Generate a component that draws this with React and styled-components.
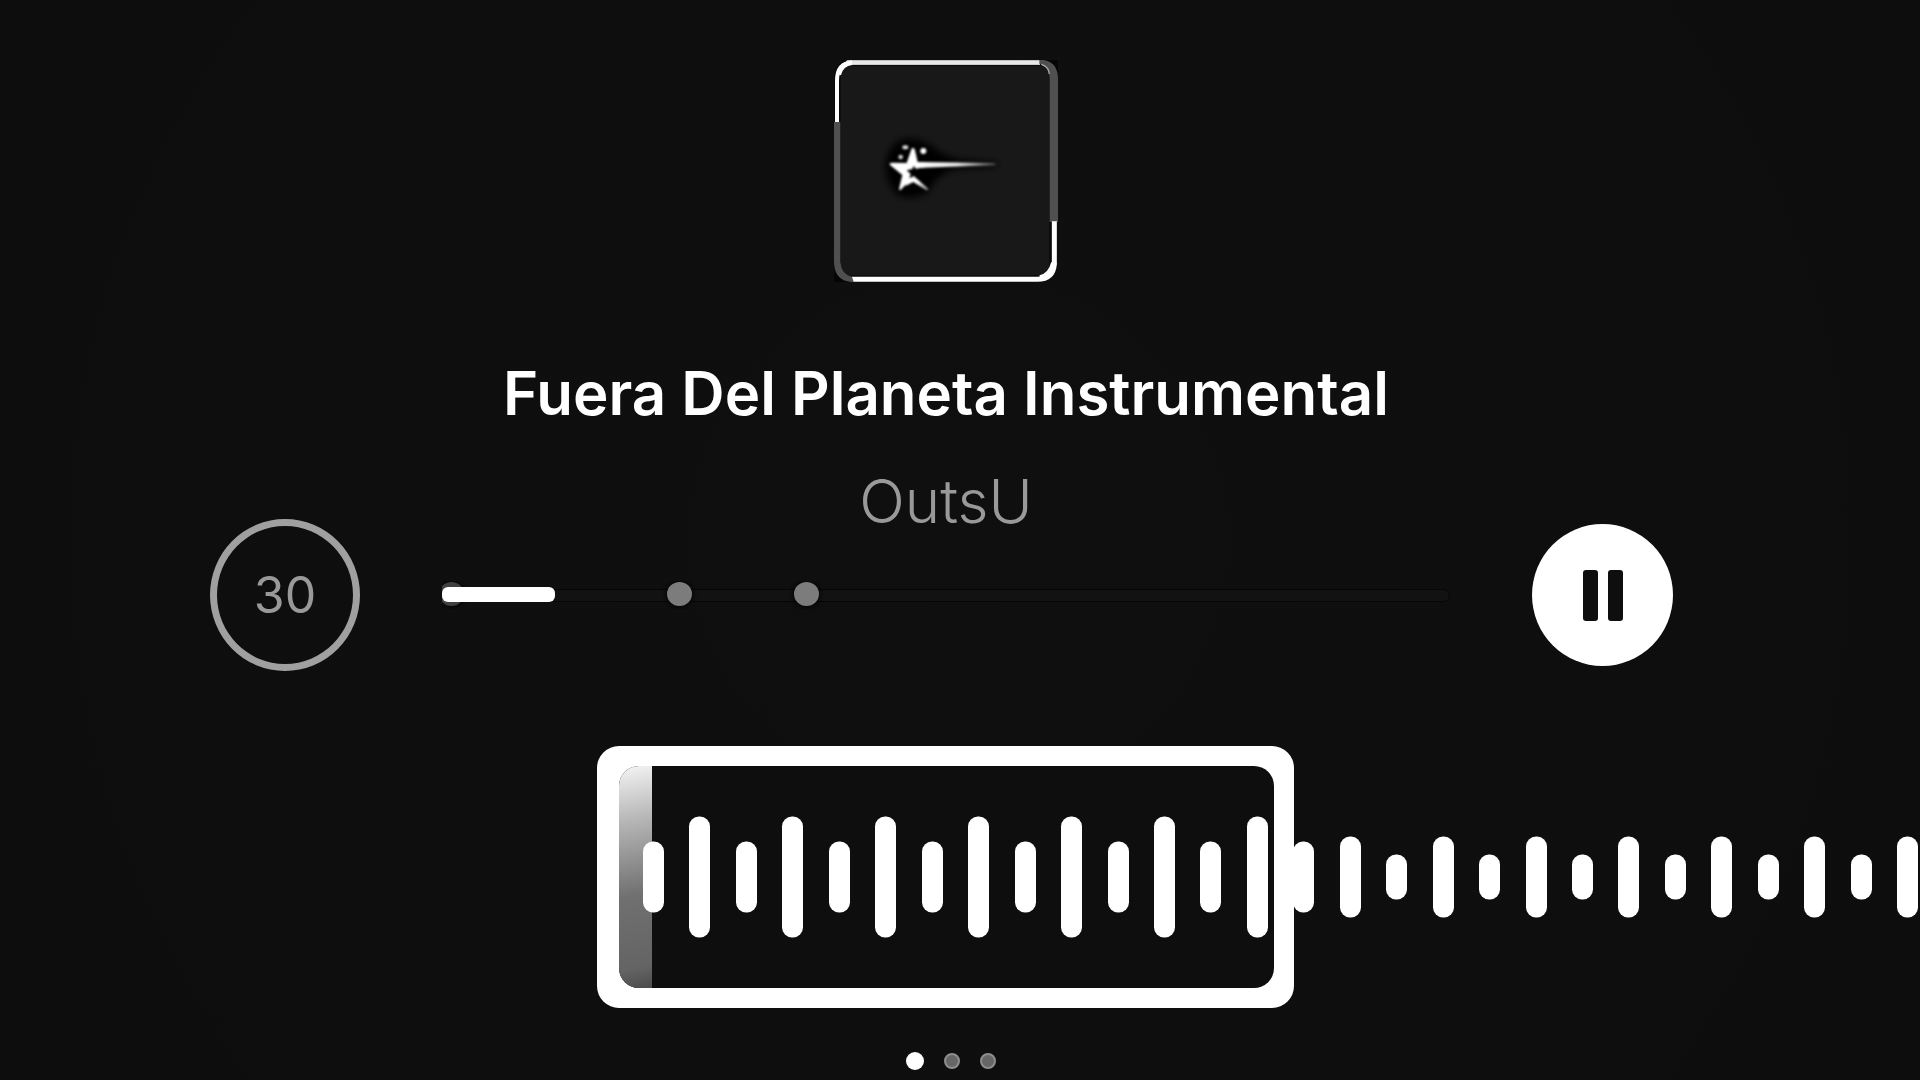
import React, { useState } from "react";
import styled, { createGlobalStyle } from "styled-components";

const GlobalStyle = createGlobalStyle`
  * { box-sizing: border-box; }
  body { margin: 0; background: #0e0e0e; }
  button { padding: 0; border: 0; font-family: inherit; cursor: pointer; }
`;

const Screen = styled.main`
  display: flex;
  flex-direction: column;
  min-height: 100vh;
  padding: 60px 0 10px;
  overflow: hidden;
  color: #fff;
  background: radial-gradient(circle at 50% 50%, #0f0f0f 0, #0e0e0e 840px, #0d0d0d 1100px);
  font-family: Inter, "Liberation Sans", sans-serif;
`;

const Header = styled.header`
  display: flex;
  flex-direction: column;
  align-items: center;
  padding-right: 28px;
  text-align: center;
`;

const Title = styled.h1`
  margin: 76px 0 0;
  font-size: 60px;
  font-weight: 600;
  line-height: 70px;
`;

const Artist = styled.p`
  margin: 38px 0 0;
  color: #999;
  font-size: 60px;
  font-weight: 300;
  line-height: 70px;
`;

const Controls = styled.section`
  display: grid;
  grid-template-columns: 150px minmax(0, 1fr) 141px;
  gap: 82px;
  align-items: center;
  margin: -17px 247px 0 210px;
`;

const DurationButton = styled.button`
  && {
    height: 152px;
    border: 7px solid #a0a0a0;
    border-radius: 50%;
    background: transparent;
    color: #999;
    font-size: 50px;
    font-weight: 400;
  }
`;

const PauseButton = styled.button`
  display: flex;
  align-items: center;
  justify-content: center;
  gap: 10px;
  height: 142px;
  border-radius: 50%;
  background: #fff;
`;

const PauseBar = styled.span`
  width: 15px;
  height: 51px;
  border-radius: 3px;
  background: #0e0e0e;
`;

const Timeline = styled.div`
  position: relative;
  display: flex;
  align-items: center;
  height: 28px;
  overflow: hidden;
`;

const Rail = styled.div`
  flex: 1;
  height: 13px;
  border: 1px solid #060606;
  border-radius: 6px;
  background: #121212;
`;

const Marker = styled.span`
  position: absolute;
  top: 1px;
  left: ${(p) => p.$at}%;
  width: 25px;
  height: 24px;
  margin-left: -13px;
  border-radius: 50%;
  background: ${(p) => (p.$played ? "#404040" : "#7c7c7c")};
  box-shadow: 0 0 4px 1px #050505;
`;

const Played = styled.span`
  position: absolute;
  top: 6px;
  left: 0;
  height: 15px;
  border-radius: 6px;
  background: #fff;
`;

const Seek = styled.input`
  position: absolute;
  inset: 0;
  width: 100%;
  margin: 0;
  opacity: 0;
  cursor: pointer;
`;

const Trimmer = styled.section`
  display: grid;
  grid-template-columns: calc(50% - 363px) 697px minmax(0, 1fr);
  align-items: center;
  margin-top: 75px;
`;

const TrimWindow = styled.div`
  grid-area: 1 / 2;
  height: 262px;
  padding: 20px 20px 20px 22px;
  border-radius: 22px;
  background: #fff;
`;

const TrimInner = styled.div`
  height: 100%;
  overflow: hidden;
  border-radius: 20px;
  background: #0e0e0e;
`;

const TrimProgress = styled.div`
  width: 33px;
  height: 100%;
  background: linear-gradient(170deg, #f4f4f4 0%, #b8b8b8 24%, #707070 58%, #646464 90%, #4c4c4c 100%);
`;

const WaveClip = styled.div`
  display: flex;
  grid-area: 1 / 2 / 2 / 4;
  overflow: hidden;
  padding-left: 46px;
`;

const Wave = styled.svg`
  flex: none;
  display: block;
`;

const Pager = styled.nav`
  display: flex;
  align-items: center;
  justify-content: center;
  gap: 20px;
  margin-top: 44px;
  padding-right: 18px;
`;

const PageDot = styled.button`
  && {
    width: ${(p) => (p.$active ? 18 : 16)}px;
    height: ${(p) => (p.$active ? 18 : 16)}px;
    border: ${(p) => (p.$active ? "0" : "2px solid #8e8e8e")};
    border-radius: 50%;
    background: ${(p) => (p.$active ? "#fff" : "#666")};
  }
`;

const MARKERS = [1, 24, 36];
const MARKER_POSITIONS = { 1: 1, 24: 23.6, 36: 36.2 };

const BAR_PITCH = 46.45;
const BARS = Array.from({ length: 28 }, (_, i) => {
  const tall = i % 2 === 1;
  const inside = i < 15;
  const height = inside ? (tall ? 121 : 71) : tall ? 81 : 45;
  return { x: Math.round(i * BAR_PITCH), height };
});

function Cover() {
  return (
    <svg width="224" height="222" viewBox="72 60 672 666" role="img" aria-label="Cover art">
      <defs>
        <filter id="halo" x="-30%" y="-40%" width="160%" height="180%">
          <feGaussianBlur stdDeviation="11" />
        </filter>
        <filter id="soft" x="-10%" y="-10%" width="120%" height="120%">
          <feGaussianBlur stdDeviation="2.4" />
        </filter>
        <linearGradient id="trail" x1="320" x2="560" y1="0" y2="0" gradientUnits="userSpaceOnUse">
          <stop offset="0" stopColor="#fff" />
          <stop offset="0.5" stopColor="#e8e8e8" />
          <stop offset="1" stopColor="#444" />
        </linearGradient>
        <linearGradient id="leg" x1="310" x2="354" y1="415" y2="450" gradientUnits="userSpaceOnUse">
          <stop offset="0.3" stopColor="#fff" />
          <stop offset="1" stopColor="#777" />
        </linearGradient>
      </defs>
      <path d="M700 60H744V110ZM72 675V726H125Z" fill="#050505" />
      <rect x="82" y="68" width="646" height="648" rx="38" fill="#181818" stroke="#0a0a0a" strokeWidth="20" />
      <path d="M81 248V122Q81 68 128 68H690" fill="none" stroke="#fff" strokeWidth="12" />
      <path d="M110 67H690" fill="none" stroke="#e8e8e8" strokeWidth="12" />
      <path d="M86 104Q94 71 126 68" fill="none" stroke="#fff" strokeWidth="14" />
      <path d="M688 60H700Q744 66 744 118V546H719V112Q719 78 688 71Z" fill="#505050" />
      <path d="M694 73Q716 80 718 102" fill="none" stroke="#aaa" strokeWidth="4" />
      <path d="M733 544V672Q730 717 682 718H126" fill="none" stroke="#fff" strokeWidth="15" />
      <path d="M732 668Q722 708 690 714" fill="none" stroke="#fff" strokeWidth="17" />
      <path d="M72 246H91V666Q94 704 126 710L131 726H124Q72 722 72 664Z" fill="#505050" />
      <path
        d="M226 380Q232 310 285 296Q345 292 390 338L440 358L556 366Q568 372 556 379L430 388Q375 410 352 458Q300 486 258 462Q230 430 226 380Z"
        fill="#000"
        filter="url(#halo)"
      />
      <path d="M330 362L556 369Q562 373 556 376L330 388Z" fill="#000" />
      <g filter="url(#soft)">
        <path
          d="M309 323Q313 323 315 331L323 366H345L345 382L318 386L311 378L307 387L290 391L302 402L298 414L309 411L300 420L272 450Q266 452 268 443L277 405L240 375Q237 368 246 368L290 369L303 331Q305 323 309 323Z"
          fill="#fff"
        />
        <path d="M290 424L311 408L355 446Q354 453 347 449L310 426L286 438Z" fill="url(#leg)" />
        <path d="M318 366L556 369Q561 373 556 376L420 380L318 384Z" fill="url(#trail)" />
        <ellipse cx="286" cy="322" rx="9" ry="6" fill="#ddd" />
        <circle cx="340" cy="333" r="9" fill="#fff" />
        <circle cx="272" cy="351" r="7" fill="#ccc" />
      </g>
    </svg>
  );
}

export default function App() {
  const [position, setPosition] = useState(11);
  const [page, setPage] = useState(0);

  return (
    <>
      <GlobalStyle />
      <Screen>
        <Header>
          <Cover />
          <Title>Fuera Del Planeta Instrumental</Title>
          <Artist>OutsU</Artist>
        </Header>

        <Controls>
          <DurationButton type="button">30</DurationButton>
          <Timeline>
            <Rail />
            {MARKERS.map((m) => (
              <Marker key={m} $at={MARKER_POSITIONS[m]} $played={m < position} />
            ))}
            <Played style={{ width: `${position + 0.2}%` }} />
            <Seek
              type="range"
              min="0"
              max="100"
              value={position}
              aria-label="Playback position"
              onChange={(e) => setPosition(Number(e.target.value))}
            />
          </Timeline>
          <PauseButton type="button" aria-label="Pause">
            <PauseBar />
            <PauseBar />
          </PauseButton>
        </Controls>

        <Trimmer>
          <TrimWindow>
            <TrimInner>
              <TrimProgress />
            </TrimInner>
          </TrimWindow>
          <WaveClip>
            <Wave width="1277" height="122" viewBox="0 0 1277 122" aria-hidden="true">
              {BARS.map((b) => (
                <rect key={b.x} x={b.x} y={(122 - b.height) / 2} width="21" height={b.height} rx="10" fill="#fff" />
              ))}
            </Wave>
          </WaveClip>
        </Trimmer>

        <Pager aria-label="Pages">
          {[0, 1, 2].map((i) => (
            <PageDot
              key={i}
              type="button"
              $active={i === page}
              aria-label={`Page ${i + 1}`}
              onClick={() => setPage(i)}
            />
          ))}
        </Pager>
      </Screen>
    </>
  );
}
